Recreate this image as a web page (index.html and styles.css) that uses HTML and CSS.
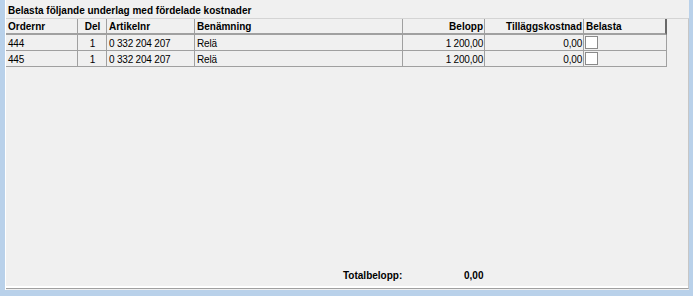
FILE: index.html
```html
<!DOCTYPE html>
<html>
<head>
<meta charset="utf-8">
<link rel="stylesheet" href="styles.css">
</head>
<body>
<div class="panel">
  <div class="title">Belasta följande underlag med fördelade kostnader</div>
  <div class="gridbox">
    <div class="grid">
      <div class="hc">Ordernr</div>
      <div class="hc ctr">Del</div>
      <div class="hc">Artikelnr</div>
      <div class="hc">Benämning</div>
      <div class="hc r">Belopp</div>
      <div class="hc r">Tilläggskostnad</div>
      <div class="hc last">Belasta</div>
      <div class="hfill"></div>

      <div class="c">444</div>
      <div class="c ctr">1</div>
      <div class="c">0 332 204 207</div>
      <div class="c">Relä</div>
      <div class="c r">1 200,00</div>
      <div class="c r">0,00</div>
      <div class="c cb"><span class="box"></span></div>
      <div class="fill"></div>

      <div class="c">445</div>
      <div class="c ctr">1</div>
      <div class="c">0 332 204 207</div>
      <div class="c">Relä</div>
      <div class="c r">1 200,00</div>
      <div class="c r">0,00</div>
      <div class="c cb"><span class="box"></span></div>
      <div class="fill"></div>
    </div>
    <div class="total">
      <span class="tlabel">Totalbelopp:</span>
      <span class="tvalue">0,00</span>
    </div>
  </div>
</div>
</body>
</html>
```
FILE: styles.css
```css
html, body {
  margin: 0;
  padding: 0;
}
body {
  width: 693px;
  height: 296px;
  overflow: hidden;
  background: #b9d1ea;
  font-family: "Liberation Sans", Arial, sans-serif;
  font-size: 10px;
  color: #000;
}
.panel {
  margin-left: 5px;
  width: 684px;
  height: 290px;
  box-sizing: border-box;
  background: #f0f0f0;
  border-left: 1px solid #ffffff;
  display: flex;
  flex-direction: column;
}
.title {
  height: 18px;
  box-sizing: border-box;
  padding: 4px 0 0 2px;
  line-height: 13px;
  font-weight: bold;
  font-size: 10px;
}
.gridbox {
  flex: 1;
  box-sizing: border-box;
  width: 683px;
  border-top: 1px solid #d4d4d4;
  border-right: 1px solid #c6c6c6;
  border-bottom: 1px solid #a0a0a0;
  box-shadow: inset 0 -2px 0 #ffffff;
  display: flex;
  flex-direction: column;
  margin-bottom: 1px;
}
.grid {
  display: grid;
  grid-template-columns: 72px 29px 88px 208px 82px 99px 83px 1fr;
  grid-auto-rows: 16px;
}
.hc {
  box-sizing: border-box;
  border-right: 1px solid #a0a0a0;
  border-bottom: 2px solid #a0a0a0;
  font-weight: bold;
  line-height: 14px;
  padding: 1px 1px 0 2px;
  white-space: nowrap;
  overflow: hidden;
}
.hc.last {
  border-right: 2px solid #696969;
}
.c {
  box-sizing: border-box;
  border-right: 1px solid #a0a0a0;
  border-bottom: 1px solid #a0a0a0;
  line-height: 15px;
  padding: 1px 1px 0 2px;
  white-space: nowrap;
  overflow: hidden;
  letter-spacing: -0.2px;
}
.r { text-align: right; }
.ctr { text-align: center; }
.cb {
  padding: 1px 0 0 1px;
}
.box {
  display: block;
  width: 13px;
  height: 13px;
  box-sizing: border-box;
  background: #ffffff;
  border: 1px solid #8a8a8a;
}
.total {
  margin-top: auto;
  display: flex;
  padding: 0 0 5px 337px;
  line-height: 14px;
  font-weight: bold;
}
.tlabel {
  width: 121px;
}
```
